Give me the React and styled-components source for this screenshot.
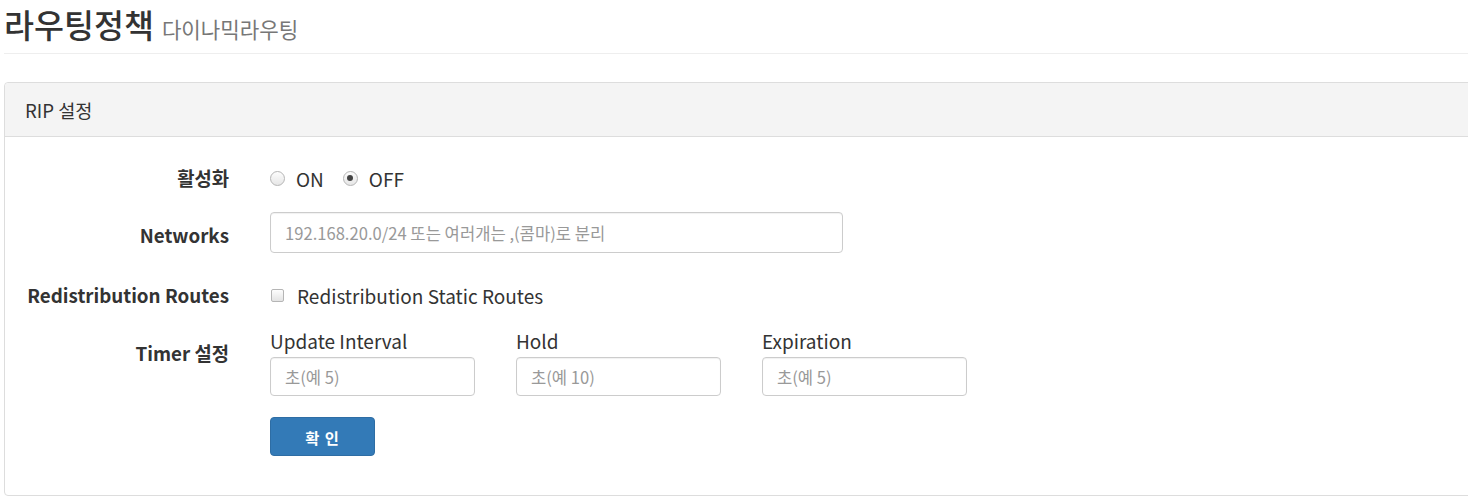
import React from 'react';
import styled, { createGlobalStyle } from 'styled-components';

const GlobalStyle = createGlobalStyle`
  html, body {
    margin: 0;
    padding: 0;
    background: #fff;
    overflow: hidden;
  }
  body {
    font-family: "Noto Sans CJK KR", "Noto Sans", sans-serif;
    color: #333;
  }
`;

const Page = styled.div`
  width: 1500px;
  padding: 0 0 0 4px;
`;

const PageHeader = styled.div`
  height: 53px;
  border-bottom: 1px solid #eee;
  display: flex;
  align-items: center;
  margin-right: 36px;
`;

const Title = styled.h1`
  margin: 0;
  font-size: 32.6px;
  font-weight: 500;
  line-height: 1;
  color: #333;
  display: flex;
  align-items: baseline;
  gap: 8px;
  transform: translateY(-2px);
`;

const SubTitle = styled.small`
  font-size: 21.2px;
  font-weight: 400;
  color: #777;
`;

const Panel = styled.div`
  margin-top: 28px;
  border: 1px solid #ddd;
  border-radius: 4px;
  height: 414px;
  box-sizing: border-box;
`;

const PanelHeading = styled.div`
  background: #f4f4f4;
  border-bottom: 1px solid #ddd;
  height: 54px;
  box-sizing: border-box;
  display: flex;
  align-items: center;
  padding-left: 20px;
  font-size: 18.6px;
  border-radius: 4px 4px 0 0;
`;

const Form = styled.div`
  display: grid;
  grid-template-columns: 224px 1fr;
  column-gap: 41px;
  padding-top: 26px;
`;

const Label = styled.div`
  font-size: 18.8px;
  font-weight: 700;
  text-align: right;
  line-height: 1;
  height: ${p => p.$h || 40}px;
  padding-top: ${p => p.$pt || 0}px;
  box-sizing: border-box;
  display: flex;
  justify-content: flex-end;
  align-items: ${p => (p.$top ? 'flex-start' : 'center')};
  margin-bottom: ${p => p.$mb || 0}px;
`;

const Field = styled.div`
  height: ${p => p.$h || 40}px;
  display: flex;
  align-items: center;
  margin-bottom: ${p => p.$mb || 0}px;
`;

const RadioInput = styled.input.attrs({ type: 'radio' })`
  appearance: none;
  margin: 0 11px 0 0;
  width: 15px;
  height: 15px;
  border-radius: 50%;
  border: 1px solid #b5b5b5;
  background: linear-gradient(#fdfdfd, #e6e6e6);
  box-sizing: border-box;
  position: relative;
  &:checked::after {
    content: '';
    position: absolute;
    left: 3.5px;
    top: 3.5px;
    width: 6px;
    height: 6px;
    border-radius: 50%;
    background: #444;
  }
`;

const CheckInput = styled.input.attrs({ type: 'checkbox' })`
  appearance: none;
  margin: 0 13px 0 1px;
  width: 13px;
  height: 13px;
  border-radius: 2px;
  border: 1px solid #b5b5b5;
  background: linear-gradient(#fdfdfd, #e3e3e3);
  box-sizing: border-box;
`;

const OptionText = styled.span`
  font-size: 19px;
  line-height: 1;
  margin-right: ${p => p.$mr || 0}px;
`;

const TextInput = styled.input`
  width: ${p => p.$w || 573}px;
  height: ${p => p.$h || 41}px;
  box-sizing: border-box;
  border: 1px solid #ccc;
  border-radius: 4px;
  padding: 0 14px;
  font-family: inherit;
  font-size: 16.6px;
  color: #555;
  box-shadow: inset 0 1px 1px rgba(0, 0, 0, 0.06);
  &::placeholder {
    color: #999;
  }
`;

const TimerRow = styled.div`
  display: flex;
  gap: 41px;
`;

const TimerItem = styled.div`
  display: flex;
  flex-direction: column;
`;

const TimerLabel = styled.div`
  font-size: 19px;
  line-height: 1;
  height: 26px;
  display: flex;
  align-items: flex-start;
  margin-top: -10px;
`;

const SubmitButton = styled.button`
  margin-top: 21px;
  width: 105px;
  height: 39px;
  border: 1px solid #2e6da4;
  border-radius: 4px;
  background: #337ab7;
  color: #fff;
  font-family: inherit;
  font-size: 15.3px;
  font-weight: 700;
  letter-spacing: 1px;
  cursor: pointer;
`;

export default function App() {
  return (
    <Page>
      <GlobalStyle />
      <PageHeader>
        <Title>
          라우팅정책
          <SubTitle>다이나믹라우팅</SubTitle>
        </Title>
      </PageHeader>

      <Panel>
        <PanelHeading>RIP 설정</PanelHeading>
        <Form>
          <Label $h={30} $mb={19}>활성화</Label>
          <Field $h={30} $mb={19}>
            <RadioInput name="rip" />
            <OptionText $mr={19}>ON</OptionText>
            <RadioInput name="rip" defaultChecked />
            <OptionText>OFF</OptionText>
          </Field>

          <Label $h={41} $pt={6} $mb={29}>Networks</Label>
          <Field $h={41} $mb={29}>
            <TextInput placeholder="192.168.20.0/24 또는 여러개는 ,(콤마)로 분리" />
          </Field>

          <Label $h={26} $mb={33}>Redistribution Routes</Label>
          <Field $h={26} $mb={33}>
            <CheckInput />
            <OptionText>Redistribution Static Routes</OptionText>
          </Field>

          <Label $h={24} $pt={3} $top>Timer 설정</Label>
          <div>
            <TimerRow>
              <TimerItem>
                <TimerLabel>Update Interval</TimerLabel>
                <TextInput $w={205} $h={39} placeholder="초(예 5)" />
              </TimerItem>
              <TimerItem>
                <TimerLabel>Hold</TimerLabel>
                <TextInput $w={205} $h={39} placeholder="초(예 10)" />
              </TimerItem>
              <TimerItem>
                <TimerLabel>Expiration</TimerLabel>
                <TextInput $w={205} $h={39} placeholder="초(예 5)" />
              </TimerItem>
            </TimerRow>
            <SubmitButton>확 인</SubmitButton>
          </div>
        </Form>
      </Panel>
    </Page>
  );
}
